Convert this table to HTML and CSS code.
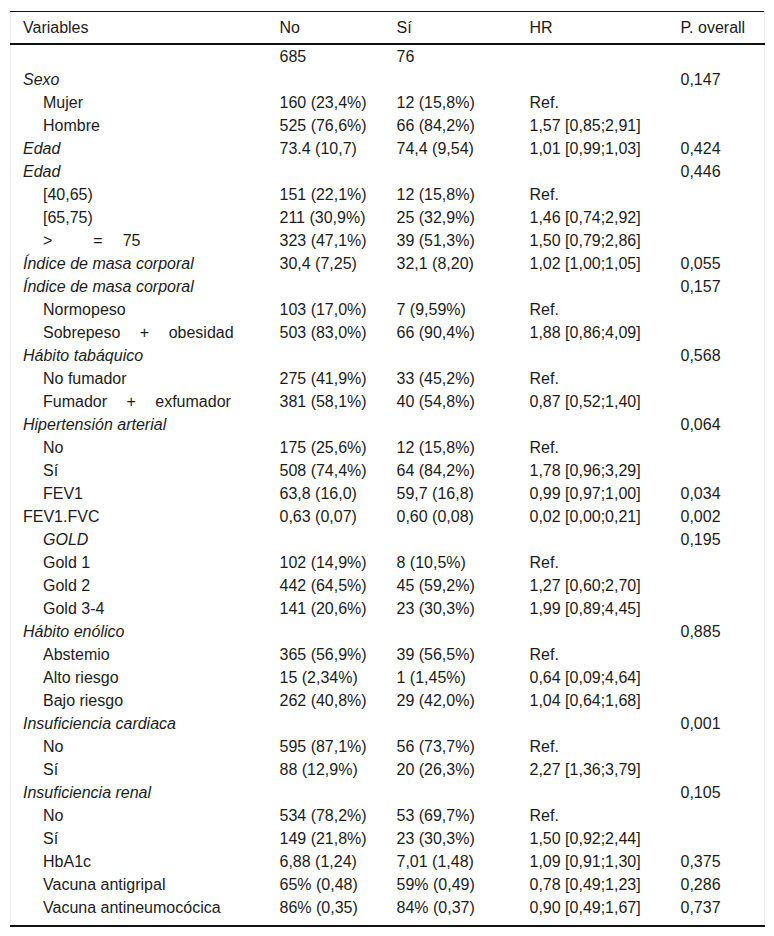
FILE: index.html
```html
<!DOCTYPE html>
<html lang="es">
<head>
<meta charset="utf-8">
<title>Tabla</title>
<link rel="stylesheet" href="styles.css">
</head>
<body>
<div class="wrap">
<table class="tbl">
<colgroup>
<col class="c1"><col class="c2"><col class="c3"><col class="c4"><col class="c5">
</colgroup>
<thead>
<tr><th>Variables</th><th>No</th><th>Sí</th><th>HR</th><th>P. overall</th></tr>
</thead>
<tbody>
<tr><td></td><td>685</td><td>76</td><td></td><td></td></tr>
<tr><td class="it">Sexo</td><td></td><td></td><td></td><td>0,147</td></tr>
<tr><td class="ind">Mujer</td><td>160 (23,4%)</td><td>12 (15,8%)</td><td>Ref.</td><td></td></tr>
<tr><td class="ind">Hombre</td><td>525 (76,6%)</td><td>66 (84,2%)</td><td>1,57 [0,85;2,91]</td><td></td></tr>
<tr><td class="it">Edad</td><td>73.4 (10,7)</td><td>74,4 (9,54)</td><td>1,01 [0,99;1,03]</td><td>0,424</td></tr>
<tr><td class="it">Edad</td><td></td><td></td><td></td><td>0,446</td></tr>
<tr><td class="ind">[40,65)</td><td>151 (22,1%)</td><td>12 (15,8%)</td><td>Ref.</td><td></td></tr>
<tr><td class="ind">[65,75)</td><td>211 (30,9%)</td><td>25 (32,9%)</td><td>1,46 [0,74;2,92]</td><td></td></tr>
<tr><td class="ind"><span class="gt">&gt;</span><span class="eq">=</span>75</td><td>323 (47,1%)</td><td>39 (51,3%)</td><td>1,50 [0,79;2,86]</td><td></td></tr>
<tr><td class="it">Índice de masa corporal</td><td>30,4 (7,25)</td><td>32,1 (8,20)</td><td>1,02 [1,00;1,05]</td><td>0,055</td></tr>
<tr><td class="it">Índice de masa corporal</td><td></td><td></td><td></td><td>0,157</td></tr>
<tr><td class="ind">Normopeso</td><td>103 (17,0%)</td><td>7 (9,59%)</td><td>Ref.</td><td></td></tr>
<tr><td class="ind ws">Sobrepeso + obesidad</td><td>503 (83,0%)</td><td>66 (90,4%)</td><td>1,88 [0,86;4,09]</td><td></td></tr>
<tr><td class="it">Hábito tabáquico</td><td></td><td></td><td></td><td>0,568</td></tr>
<tr><td class="ind">No fumador</td><td>275 (41,9%)</td><td>33 (45,2%)</td><td>Ref.</td><td></td></tr>
<tr><td class="ind ws">Fumador + exfumador</td><td>381 (58,1%)</td><td>40 (54,8%)</td><td>0,87 [0,52;1,40]</td><td></td></tr>
<tr><td class="it">Hipertensión arterial</td><td></td><td></td><td></td><td>0,064</td></tr>
<tr><td class="ind">No</td><td>175 (25,6%)</td><td>12 (15,8%)</td><td>Ref.</td><td></td></tr>
<tr><td class="ind">Sí</td><td>508 (74,4%)</td><td>64 (84,2%)</td><td>1,78 [0,96;3,29]</td><td></td></tr>
<tr><td class="ind">FEV1</td><td>63,8 (16,0)</td><td>59,7 (16,8)</td><td>0,99 [0,97;1,00]</td><td>0,034</td></tr>
<tr><td>FEV1.FVC</td><td>0,63 (0,07)</td><td>0,60 (0,08)</td><td>0,02 [0,00;0,21]</td><td>0,002</td></tr>
<tr><td class="ind it">GOLD</td><td></td><td></td><td></td><td>0,195</td></tr>
<tr><td class="ind">Gold 1</td><td>102 (14,9%)</td><td>8 (10,5%)</td><td>Ref.</td><td></td></tr>
<tr><td class="ind">Gold 2</td><td>442 (64,5%)</td><td>45 (59,2%)</td><td>1,27 [0,60;2,70]</td><td></td></tr>
<tr><td class="ind">Gold 3-4</td><td>141 (20,6%)</td><td>23 (30,3%)</td><td>1,99 [0,89;4,45]</td><td></td></tr>
<tr><td class="it">Hábito enólico</td><td></td><td></td><td></td><td>0,885</td></tr>
<tr><td class="ind">Abstemio</td><td>365 (56,9%)</td><td>39 (56,5%)</td><td>Ref.</td><td></td></tr>
<tr><td class="ind">Alto riesgo</td><td>15 (2,34%)</td><td>1 (1,45%)</td><td>0,64 [0,09;4,64]</td><td></td></tr>
<tr><td class="ind">Bajo riesgo</td><td>262 (40,8%)</td><td>29 (42,0%)</td><td>1,04 [0,64;1,68]</td><td></td></tr>
<tr><td class="it">Insuficiencia cardiaca</td><td></td><td></td><td></td><td>0,001</td></tr>
<tr><td class="ind">No</td><td>595 (87,1%)</td><td>56 (73,7%)</td><td>Ref.</td><td></td></tr>
<tr><td class="ind">Sí</td><td>88 (12,9%)</td><td>20 (26,3%)</td><td>2,27 [1,36;3,79]</td><td></td></tr>
<tr><td class="it">Insuficiencia renal</td><td></td><td></td><td></td><td>0,105</td></tr>
<tr><td class="ind">No</td><td>534 (78,2%)</td><td>53 (69,7%)</td><td>Ref.</td><td></td></tr>
<tr><td class="ind">Sí</td><td>149 (21,8%)</td><td>23 (30,3%)</td><td>1,50 [0,92;2,44]</td><td></td></tr>
<tr><td class="ind">HbA1c</td><td>6,88 (1,24)</td><td>7,01 (1,48)</td><td>1,09 [0,91;1,30]</td><td>0,375</td></tr>
<tr><td class="ind">Vacuna antigripal</td><td>65% (0,48)</td><td>59% (0,49)</td><td>0,78 [0,49;1,23]</td><td>0,286</td></tr>
<tr class="last"><td class="ind">Vacuna antineumocócica</td><td>86% (0,35)</td><td>84% (0,37)</td><td>0,90 [0,49;1,67]</td><td>0,737</td></tr>
</tbody>
</table>
</div>
</body>
</html>
```

FILE: styles.css
```css
html, body {
  margin: 0;
  padding: 0;
  background: #fff;
}
.wrap {
  padding: 11px 10px 0 10px;
}
.tbl {
  width: 754px;
  table-layout: fixed;
  border-collapse: collapse;
  font-family: "Liberation Sans", Arial, sans-serif;
  font-size: 16px;
  line-height: 18px;
  color: #1c1c1c;
  border-top: 1px solid #111;
  border-bottom: 2px solid #111;
  border-left: 1px solid #ececec;
  border-right: 1px solid #ececec;
}
.c1 { width: 257px; }
.c2 { width: 117px; }
.c3 { width: 133px; }
.c4 { width: 151px; }
.c5 { width: 96px; }
.tbl th {
  font-weight: normal;
  text-align: left;
  height: 31px;
  padding: 0 0 0 12px;
  border-bottom: 2px solid #111;
  white-space: nowrap;
}
.tbl td {
  height: 23px;
  padding: 0 0 0 12px;
  white-space: nowrap;
  vertical-align: middle;
}
.tbl tr.last td {
  height: 23px;
  padding-bottom: 6px;
}
.it { font-style: italic; }
.tbl td.ind { padding-left: 32px; }
.ws { word-spacing: 15px; }
.gt { margin-right: 41px; }
.eq { margin-right: 20px; }
```
